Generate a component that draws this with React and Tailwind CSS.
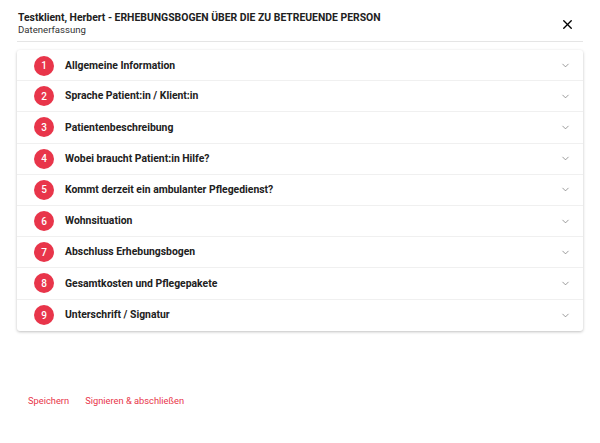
import React from "react";
import { X, ChevronDown } from "lucide-react";

const sections = [
  "Allgemeine Information",
  "Sprache Patient:in / Klient:in",
  "Patientenbeschreibung",
  "Wobei braucht Patient:in Hilfe?",
  "Kommt derzeit ein ambulanter Pflegedienst?",
  "Wohnsituation",
  "Abschluss Erhebungsbogen",
  "Gesamtkosten und Pflegepakete",
  "Unterschrift / Signatur",
];

export default function App() {
  return (
    <div
      className="w-[600px] h-[443px] bg-white flex flex-col text-[#212121]"
      style={{ fontFamily: "Roboto, 'Noto Sans', sans-serif" }}
    >
      {/* Header */}
      <div className="flex items-center justify-between pl-[18px] pr-[25px] pt-[11px] pb-[5px]">
        <div className="flex flex-col">
          <h1 className="text-[10.4px] font-bold leading-[13px]">
            Testklient, Herbert - ERHEBUNGSBOGEN ÜBER DIE ZU BETREUENDE PERSON
          </h1>
          <span className="text-[9.6px] leading-[12px] text-[#333]">Datenerfassung</span>
        </div>
        <button className="text-black mt-[1px]">
          <X size={15} strokeWidth={2.2} />
        </button>
      </div>
      <div className="mx-[17px] border-b border-[#e5e5e5]" />

      {/* Accordion */}
      <div className="mx-[17px] mt-[8px] bg-white rounded-[3px] shadow-[0_1px_3px_rgba(0,0,0,0.25)]">
        {sections.map((label, i) => (
          <div
            key={label}
            className={`flex items-center h-[31.2px] pl-[17px] pr-[12px] ${
              i === 0 ? "pt-[1px]" : ""
            } ${i < sections.length - 1 ? "border-b border-[#f0f0f0]" : ""}`}
          >
            <div className="w-[20px] h-[20px] rounded-full bg-[#e8354a] text-white text-[10px] font-medium flex items-center justify-center">
              {i + 1}
            </div>
            <span className="ml-[11px] text-[10.4px] font-bold flex-1">{label}</span>
            <ChevronDown size={11} strokeWidth={1.6} className="text-[#777]" />
          </div>
        ))}
      </div>

      {/* Actions */}
      <div className="flex items-center gap-[16px] pl-[28px] mt-[63px]">
        <button className="text-[9.3px] text-[#e8354a]">Speichern</button>
        <button className="text-[9.3px] text-[#e8354a]">Signieren &amp; abschließen</button>
      </div>
    </div>
  );
}
